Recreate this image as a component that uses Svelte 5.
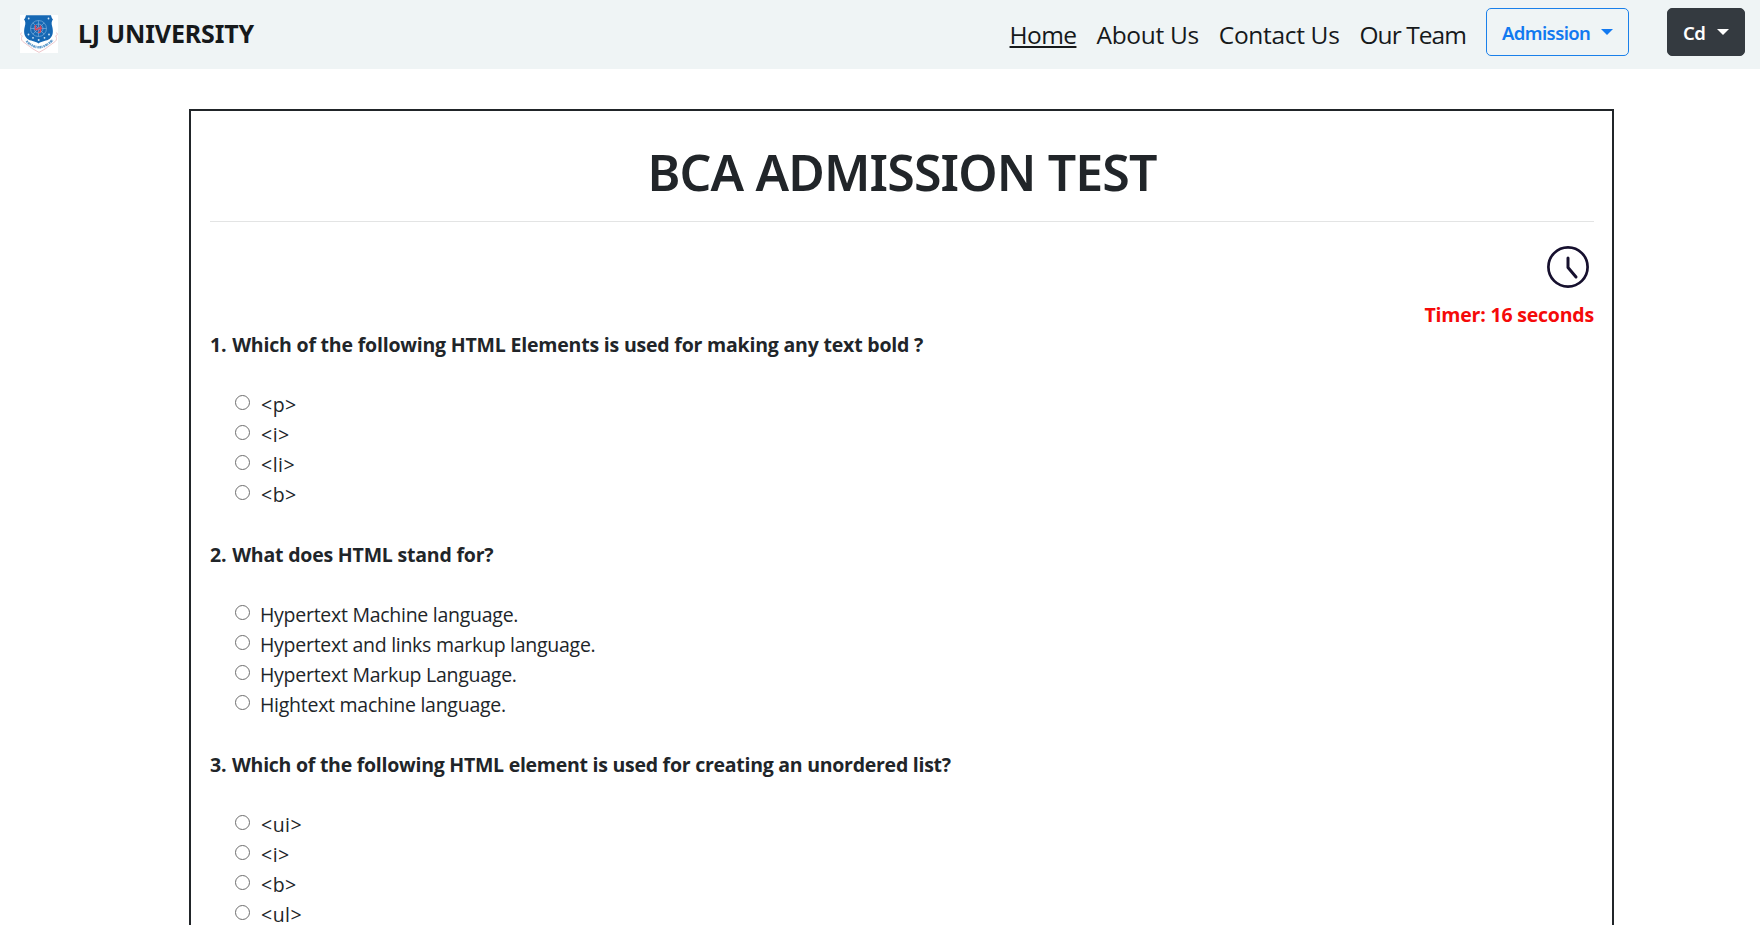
<script>
  const links = ['Home', 'About Us', 'Contact Us', 'Our Team'];
  const questions = [
    {
      text: 'Which of the following HTML Elements is used for making any text bold ?',
      options: ['<p>', '<i>', '<li>', '<b>']
    },
    {
      text: 'What does HTML stand for?',
      options: [
        'Hypertext Machine language.',
        'Hypertext and links markup language.',
        'Hypertext Markup Language.',
        'Hightext machine language.'
      ]
    },
    {
      text: 'Which of the following HTML element is used for creating an unordered list?',
      options: ['<ui>', '<i>', '<b>', '<ul>']
    }
  ];
  const seconds = 16;
</script>

<div class="page">
  <header>
    <svg class="logo" viewBox="0 0 38 38" width="38" height="38">
      <rect width="38" height="38" fill="#fff" />
      <path d="M2 17.500c-2 1-1.600 3.200.4 3.400-1.200 1.500-1.500 4 .4 5.600L13 34l6 3.400 6-3.400 10.200-7.500c1.900-1.600 1.600-4.100.4-5.600 2-.2 2.400-2.400.4-3.400" fill="#fff" stroke="#eab9be" stroke-width=".8" />
      <path d="M6 .2h25c.4 2 1 3.300 2 4.100-1.700 2.300-1.600 4.300-.8 7.300 1.300 5 .8 9.500-2.400 12.200-3 2.500-7.800 1.900-11.300 4.800-3.500-2.900-8.300-2.300-11.300-4.800-3.200-2.700-3.700-7.200-2.400-12.200.8-3 .9-5-.8-7.300 1-.8 1.600-2.100 2-4.100z" fill="#1668b4" />
      <g fill="none" stroke="#8db9e0" stroke-width=".6">
        <circle cx="18.500" cy="13.500" r="8" />
        <circle cx="18.500" cy="13.500" r="4.500" />
        <path d="M10.500 13.500h16M18.500 5.500v16M12.800 7.800l11.400 11.400M24.200 7.800L12.800 19.200" />
      </g>
      <path d="M15.500 10v4.500h3M20.500 10.500v5.200q0 2-2.200 1.500M17.500 13.300h4.500" fill="none" stroke="#d9485c" stroke-width="1.500" />
      <g fill="#d5e6f5">
        <circle cx="8.700" cy="3.500" r=".9" /><circle cx="28.500" cy="3.500" r=".9" />
        <circle cx="8.500" cy="19.500" r=".9" /><circle cx="29" cy="19.500" r=".9" />
        <circle cx="13" cy="22.800" r=".9" /><circle cx="24.500" cy="22.800" r=".9" />
        <circle cx="18.700" cy="25" r="1" />
      </g>
      <path d="M6.500 26Q19 39 32.500 25" fill="none" stroke="#5f9acb" stroke-width="2.400" stroke-dasharray="1.500 .5 2 .4 1 .9" />
    </svg>
    <span class="brand">LJ UNIVERSITY</span>
    <nav>
      {#each links as link, i}
        <a href="#top" class:active={i === 0}>{link}</a>
      {/each}
    </nav>
    <button class="outline" type="button">Admission<i class="caret"></i></button>
    <button class="dark" type="button">Cd<i class="caret"></i></button>
  </header>

  <main>
    <h1>BCA ADMISSION TEST</h1>
    <hr />
    <div class="timer">
      <svg viewBox="0 0 50 50" width="50" height="50" fill="none" stroke="#16102e" stroke-linecap="round" stroke-linejoin="round">
        <circle cx="25" cy="25" r="19.600" stroke-width="2.700" />
        <path d="M25 16v9.500l8 9.500" stroke-width="3" />
      </svg>
      <strong>Timer: {seconds} seconds</strong>
    </div>
    {#each questions as q, n}
      <section>
        <h2><span class="number">{n + 1}.</span> {q.text}</h2>
        {#each q.options as option}
          <label class:tag={option.startsWith('<')}>
            <input type="radio" name="q{n}" />
            <span>{option}</span>
          </label>
        {/each}
      </section>
    {/each}
  </main>
</div>

<style>
  :global(body) {
    overflow: hidden;
  }
  .page {
    height: 925px;
    overflow: hidden;
    background: #fff;
    color: #212529;
    font: 19.5px/30px 'Open Sans', sans-serif;
  }
  header {
    display: flex;
    align-items: center;
    box-sizing: border-box;
    height: 69px;
    padding: 0 15px 0 20px;
    background: #eff4f5;
  }
  .logo {
    flex: none;
    margin-bottom: 1px;
  }
  .brand {
    margin: 0 0 4px 20px;
    font: 700 25px/38px 'Noto Sans', sans-serif;
    letter-spacing: -0.15px;
    color: #16191b;
  }
  nav {
    display: flex;
    gap: 20px;
    margin-left: auto;
    font-size: 24.5px;
    line-height: 37px;
    padding-bottom: 1px;
  }
  nav a {
    color: #16191b;
    text-decoration: none;
    white-space: nowrap;
    letter-spacing: -0.32px;
  }
  nav a.active {
    letter-spacing: -0.58px;
    text-decoration: underline;
    text-decoration-thickness: 2px;
    text-underline-offset: 2px;
  }
  nav a:last-child {
    letter-spacing: -0.94px;
  }
  button {
    display: flex;
    align-items: center;
    box-sizing: border-box;
    height: 48px;
    margin: 0 0 5px;
    padding: 2px 15px 0;
    border: 1px solid;
    border-radius: 5px;
    font: 600 18.5px/30px 'Noto Sans', sans-serif;
    letter-spacing: -0.6px;
  }
  .outline {
    width: 143px;
    margin-left: 20px;
    border-color: #1a80ea;
    background: transparent;
    color: #1279f0;
  }
  .dark {
    width: 78px;
    margin-left: 38px;
    border-color: #343a40;
    background: #343a40;
    color: #fff;
  }
  .caret {
    margin: -3px 0 0 auto;
    border: 6px solid transparent;
    border-top-color: currentColor;
    border-bottom: 0;
  }
  main {
    box-sizing: border-box;
    width: 1425px;
    margin: 40px 0 0 189px;
    padding: 31px 18px 30px 19px;
    border: 2px solid #212529;
  }
  h1 {
    margin: 0;
    text-align: center;
    font: 600 50px/60px 'Noto Sans', sans-serif;
    letter-spacing: -0.85px;
  }
  hr {
    height: 1px;
    margin: 19px 0 20px;
    border: 0;
    background: #e3e4e4;
  }
  .timer {
    display: flex;
    flex-direction: column;
    align-items: flex-end;
    gap: 8px;
    color: #f50a0a;
  }
  .timer svg {
    margin-right: 1px;
  }
  .timer strong {
    letter-spacing: -0.2px;
  }
  section {
    height: 210px;
  }
  h2 {
    margin: 0 0 30px;
    font-size: inherit;
    line-height: inherit;
    letter-spacing: -0.2px;
  }
  section:last-child h2 {
    letter-spacing: -0.26px;
  }
  .number {
    margin-right: 1px;
  }
  label {
    display: flex;
    align-items: flex-start;
    height: 30px;
    padding-left: 25px;
    letter-spacing: -0.27px;
  }
  input {
    appearance: none;
    box-sizing: border-box;
    width: 15px;
    height: 15px;
    margin: 5px 10px 0 0;
    border: 1.25px solid #6e6e6e;
    border-radius: 50%;
    background: #fff;
  }
  .tag {
    letter-spacing: 0.5px;
  }
  .tag span {
    margin-left: 1px;
  }
</style>
